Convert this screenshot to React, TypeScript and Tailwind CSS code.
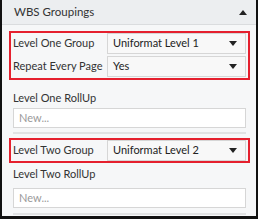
import React from "react";

const Caret = () => (
  <svg width="8" height="5" viewBox="0 0 8 5" className="shrink-0">
    <path d="M0 0 L8 0 L4 5 Z" fill="#222" />
  </svg>
);

const Select = ({ value }: { value: string }) => (
  <div className="flex-1 h-[21px] bg-[#f8f8f8] border border-[#d6d6d6] flex items-center justify-between pl-[5px] pr-[8px] text-[#222]">
    <span className="whitespace-nowrap">{value}</span>
    <Caret />
  </div>
);

const Row = ({ label, value }: { label: string; value: string }) => (
  <div className="flex items-center h-[21px]">
    <div className="w-[96px] shrink-0 pl-[2px] whitespace-nowrap">{label}</div>
    <Select value={value} />
  </div>
);

const Input = () => (
  <div className="h-[20px] bg-white border border-[#d6d6d6] flex items-center pl-[5px] text-[#9a9a9a]">New...</div>
);

export default function App() {
  return (
    <div
      className="w-[258px] h-[219px] bg-[#f6f7f8] border-l-2 border-r-2 border-b-[3px] border-[#111] flex flex-col text-[11px] text-[#333] overflow-hidden"
      style={{ fontFamily: 'Lato, "Noto Sans", sans-serif' }}
    >
      <div className="h-[25px] shrink-0 bg-[#eceef0] border-b border-[#dadcde] flex items-center justify-between pl-[12px] pr-[9px]">
        <span className="text-[#333] text-[11.5px]">WBS Groupings</span>
        <svg width="8" height="5" viewBox="0 0 8 5">
          <path d="M0 5 L8 5 L4 0 Z" fill="#222" />
        </svg>
      </div>
      <div className="flex flex-col pl-[7px] pr-[6px] pt-[6px]">
        <div className="border-2 border-[#e5202e] pt-[0px] pb-[1px] pr-[2px] flex flex-col gap-[2px]">
          <Row label="Level One Group" value="Uniformat Level 1" />
          <Row label="Repeat Every Page" value="Yes" />
        </div>
        <div className="pl-[4px] pr-[4px] flex flex-col">
          <div className="h-[16px] flex items-center mt-[10px] whitespace-nowrap">Level One RollUp</div>
          <div className="mt-[2px]"><Input /></div>
          <div className="h-[2px] bg-[#e1e2e3] mt-[4px]" />
        </div>
        <div className="border-2 border-[#e5202e] pb-[0px] pr-[2px] mt-[4px]">
          <Row label="Level Two Group" value="Uniformat Level 2" />
        </div>
        <div className="pl-[4px] pr-[4px] flex flex-col">
          <div className="h-[16px] flex items-center mt-[3px] whitespace-nowrap">Level Two RollUp</div>
          <div className="mt-[6px]"><Input /></div>
          <div className="h-[2px] bg-[#e1e2e3] mt-[5px]" />
        </div>
      </div>
    </div>
  );
}
